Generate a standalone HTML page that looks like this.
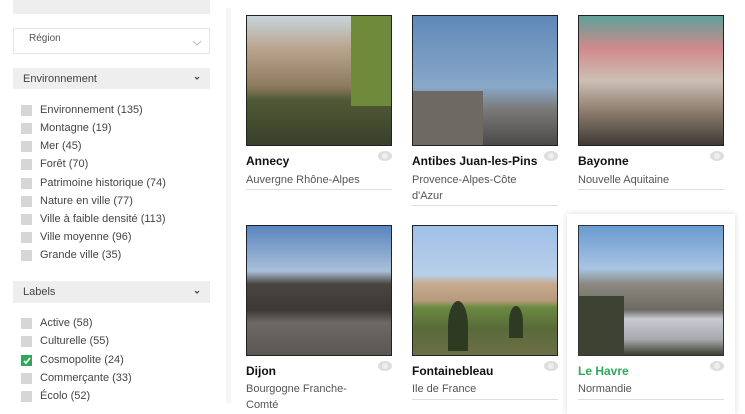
<!DOCTYPE html>
<html><head><meta charset="utf-8"><style>
*{margin:0;padding:0;box-sizing:border-box}
body{width:745px;height:403px;overflow:hidden;background:#fff;font-family:"Liberation Sans",Arial,sans-serif;color:#333;position:relative}
.a{position:absolute}
.bar{background:#eeeeee;left:13px;width:197px}
.cb{position:absolute;left:21px;width:11px;height:11px;background:#d6d6d6}
.li{position:absolute;left:40px;font-size:11px;color:#444}
.img{position:absolute;width:146px;height:131px;border:1px solid #222;overflow:hidden}
.t{position:absolute;font-size:12px;font-weight:bold;color:#111}
.s{position:absolute;font-size:11px;color:#555;line-height:16px;width:140px}
.ln{position:absolute;height:1px;background:#ddd;width:146px}
.eye{position:absolute;width:14px;height:10px;border-radius:50%;background:#ddd}
.eye:after{content:"";position:absolute;left:4px;top:2px;width:6px;height:6px;border-radius:50%;background:#eee}
</style></head><body>
<div class="a bar" style="top:0;height:14px"></div>
<div class="a" style="left:13px;top:28px;width:197px;height:26px;border:1px solid #e6e6e6"></div>
<div class="li" style="left:29px;top:33px;font-size:10px;color:#555">Région</div>
<svg class="a" style="left:192px;top:40px" width="10" height="6"><path d="M1 1L5 5L9 1" fill="none" stroke="#bbb" stroke-width="1"/></svg>
<div class="a bar" style="top:68px;height:21px"></div>
<div class="li" style="left:23px;top:73px;font-size:11px;color:#444">Environnement</div>
<svg class="a" style="left:194px;top:76px" width="6" height="4"><path d="M1 1L3 3L5 1" fill="none" stroke="#444" stroke-width="1.2"/></svg>

<div class="cb" style="top:105px"></div><div class="li" style="top:104px">Environnement (135)</div>
<div class="cb" style="top:123px"></div><div class="li" style="top:122px">Montagne (19)</div>
<div class="cb" style="top:141px"></div><div class="li" style="top:140px">Mer (45)</div>
<div class="cb" style="top:159px"></div><div class="li" style="top:158px">Forêt (70)</div>
<div class="cb" style="top:178px"></div><div class="li" style="top:177px">Patrimoine historique (74)</div>
<div class="cb" style="top:196px"></div><div class="li" style="top:195px">Nature en ville (77)</div>
<div class="cb" style="top:214px"></div><div class="li" style="top:213px">Ville à faible densité (113)</div>
<div class="cb" style="top:232px"></div><div class="li" style="top:231px">Ville moyenne (96)</div>
<div class="cb" style="top:250px"></div><div class="li" style="top:249px">Grande ville (35)</div>

<div class="a bar" style="top:281px;height:22px"></div>
<div class="li" style="left:23px;top:286px;font-size:11px">Labels</div>
<svg class="a" style="left:194px;top:290px" width="6" height="4"><path d="M1 1L3 3L5 1" fill="none" stroke="#444" stroke-width="1.2"/></svg>
<div class="cb" style="top:318px"></div><div class="li" style="top:317px">Active (58)</div>
<div class="cb" style="top:336px"></div><div class="li" style="top:335px">Culturelle (55)</div>
<div class="cb" style="top:355px;background:#2ea85a"></div><svg class="a" style="left:22px;top:356px" width="10" height="10"><path d="M2 5L4 7L8 2" fill="none" stroke="#fff" stroke-width="1.8"/></svg><div class="li" style="top:354px">Cosmopolite (24)</div>
<div class="cb" style="top:373px"></div><div class="li" style="top:372px">Commerçante (33)</div>
<div class="cb" style="top:391px"></div><div class="li" style="top:390px">Écolo (52)</div>

<div class="a" style="left:226px;top:8px;width:5px;height:395px;background:#f6f6f6"></div>

<div class="img" style="left:246px;top:15px;background:linear-gradient(180deg,#c9d4dc 0%,#b9a58e 25%,#8c7a5e 55%,#4f5a35 65%,#3a3f2a 100%)"><div class="a" style="right:0;top:0;width:40px;height:90px;background:#6f8a3a"></div></div>
<div class="img" style="left:412px;top:15px;background:linear-gradient(180deg,#5f88b8 0%,#89a8c9 55%,#7b7a78 72%,#4c4a48 100%)"><div class="a" style="left:0;top:75px;width:70px;height:57px;background:#6e6a63"></div></div>
<div class="img" style="left:578px;top:15px;background:linear-gradient(180deg,#5fa09a 0%,#d08a8a 25%,#cdbfb5 50%,#8a7a6a 75%,#3f3a35 100%)"></div>
<div class="t" style="left:246px;top:154px">Annecy</div>
<div class="s" style="left:246px;top:172px">Auvergne Rhône-Alpes</div>
<div class="ln" style="left:246px;top:189px"></div>
<div class="t" style="left:412px;top:154px">Antibes Juan-les-Pins</div>
<div class="s" style="left:412px;top:172px;width:120px">Provence-Alpes-Côte d'Azur</div>
<div class="ln" style="left:412px;top:205px"></div>
<div class="t" style="left:578px;top:154px">Bayonne</div>
<div class="s" style="left:578px;top:172px">Nouvelle Aquitaine</div>
<div class="ln" style="left:578px;top:189px"></div>
<div class="eye" style="left:378px;top:151px"></div>
<div class="eye" style="left:544px;top:151px"></div>
<div class="eye" style="left:710px;top:151px"></div>

<div class="a" style="left:567px;top:214px;width:168px;height:200px;background:#fff;box-shadow:0 0 6px rgba(0,0,0,.15)"></div>
<div class="img" style="left:246px;top:225px;background:linear-gradient(180deg,#5a86c0 0%,#a9bfd8 35%,#4a4540 45%,#3c3935 65%,#6d6a66 75%,#5a5753 100%)"></div>
<div class="img" style="left:412px;top:225px;background:linear-gradient(180deg,#9fc0e8 0%,#b8cfe8 38%,#c7a98e 45%,#b79a7e 58%,#6a8a40 63%,#5a6a3a 80%,#6b6e45 100%)"><div class="a" style="left:35px;top:75px;width:20px;height:50px;background:#2e3a22;border-radius:50% 50% 0 0"></div><div class="a" style="left:96px;top:80px;width:14px;height:32px;background:#2e3a22;border-radius:50% 50% 0 0"></div></div>
<div class="img" style="left:578px;top:225px;border-color:#333;background:linear-gradient(180deg,#6a9ad0 0%,#a8c4e2 33%,#8a8880 45%,#6e6a62 65%,#c8cbd2 72%,#a6a8ac 88%,#3a3f2e 100%)"><div class="a" style="left:0;top:70px;width:45px;height:62px;background:#3d4232"></div></div>
<div class="t" style="left:246px;top:364px">Dijon</div>
<div class="s" style="left:246px;top:381px;width:120px">Bourgogne Franche-Comté</div>
<div class="t" style="left:412px;top:364px">Fontainebleau</div>
<div class="s" style="left:412px;top:381px">Ile de France</div>
<div class="ln" style="left:412px;top:399px"></div>
<div class="t" style="left:578px;top:364px;color:#2ea85a">Le Havre</div>
<div class="s" style="left:578px;top:381px">Normandie</div>
<div class="ln" style="left:578px;top:399px"></div>
<div class="eye" style="left:378px;top:361px"></div>
<div class="eye" style="left:544px;top:361px"></div>
<div class="eye" style="left:710px;top:361px"></div>
</body></html>
